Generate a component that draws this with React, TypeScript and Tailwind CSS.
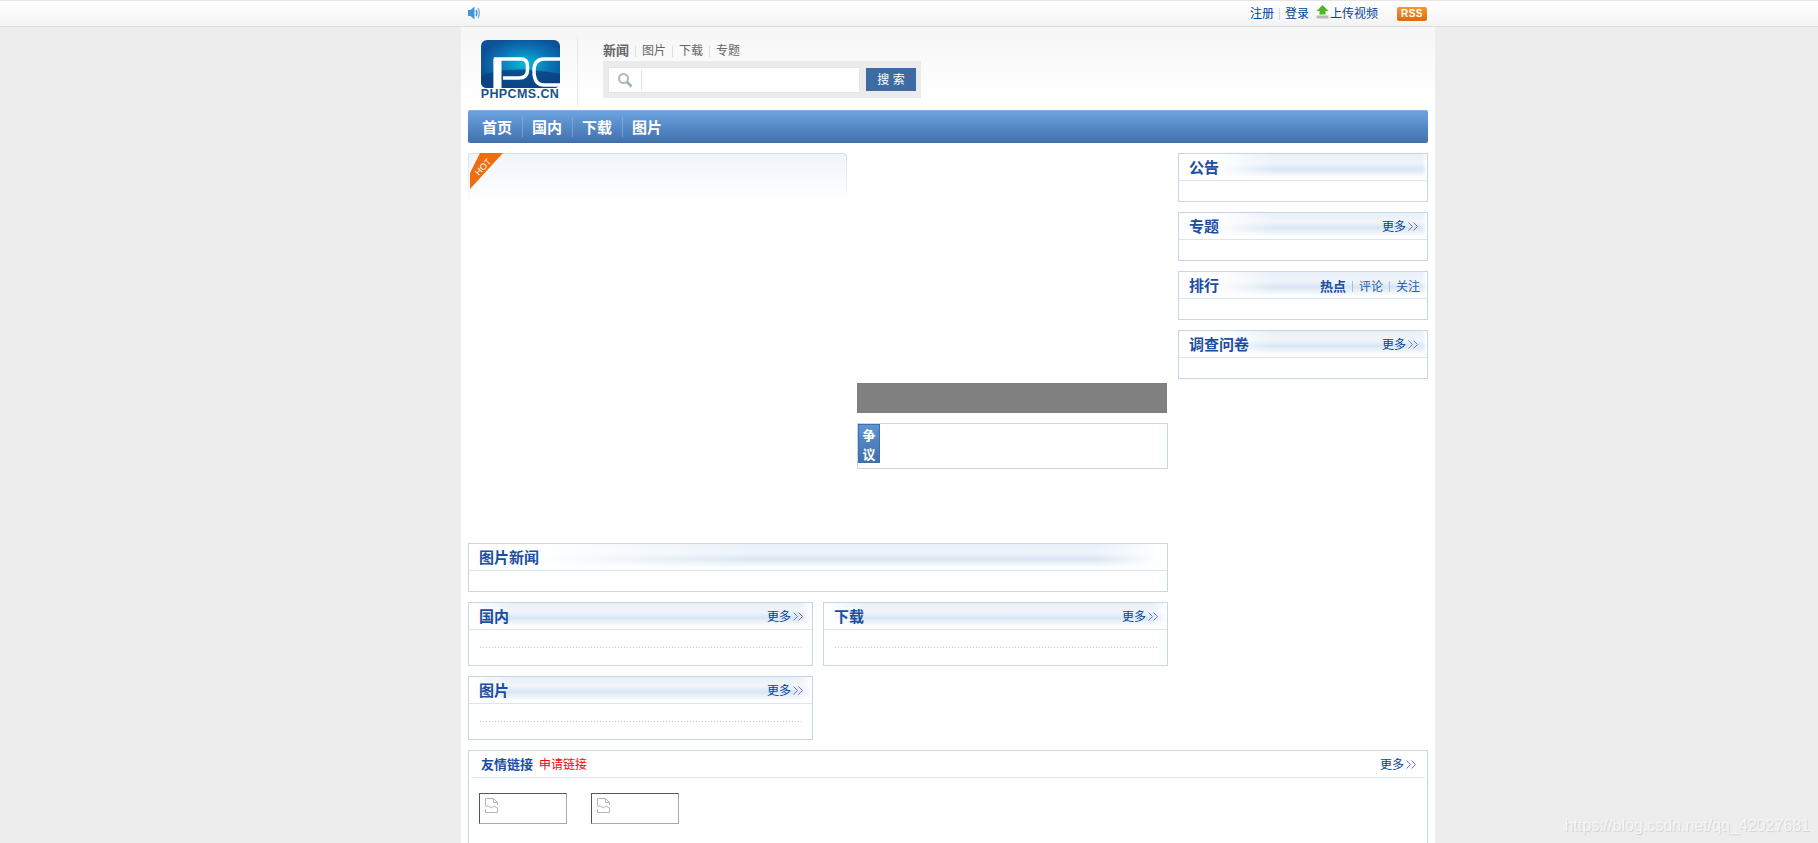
import React from "react";

const bands = {
  side: "bg-[linear-gradient(90deg,#fff_15%,rgba(255,255,255,0)_38%,rgba(255,255,255,0)_98%,#fff),linear-gradient(180deg,#e9f0f8,#f0f5fb_35%,#d9e6f3_58%,#f1f5fb_78%,#fff_92%)]",
  wide: "bg-[linear-gradient(90deg,#fff_9%,rgba(255,255,255,0)_40%,rgba(255,255,255,0)_90%,#fff_99%),linear-gradient(180deg,#e9f0f8,#f0f5fb_35%,#d9e6f3_58%,#f1f5fb_78%,#fff_92%)]",
  half: "bg-[linear-gradient(90deg,#fff_1%,rgba(255,255,255,0)_12%,rgba(255,255,255,0)_96%,#fff),linear-gradient(180deg,#e9f0f8,#f0f5fb_35%,#d9e6f3_58%,#f1f5fb_78%,#fff_92%)]",
};

function Chevrons() {
  return (
    <svg width="11" height="9" viewBox="0 0 11 9" className="ml-[2px]" fill="none" stroke="#6f79c4" strokeWidth="1">
      <path d="M0.5 0.5 L4.5 4.5 L0.5 8.5" />
      <path d="M5.5 0.5 L9.5 4.5 L5.5 8.5" />
    </svg>
  );
}

function More() {
  return (
    <a className="flex items-center text-[12px] leading-none text-[#004499]">
      更多
      <Chevrons />
    </a>
  );
}

function Box({
  title,
  right,
  children,
  bodyClass = "h-[20px]",
  band = "side",
  pad = "pr-[8px]",
}: {
  title: string;
  right?: React.ReactNode;
  children?: React.ReactNode;
  bodyClass?: string;
  band?: "side" | "wide" | "half";
  pad?: string;
}) {
  return (
    <div className="border border-[#c6d6e6] bg-white">
      <div className={`h-[26px] flex items-center justify-between pl-[10px] pt-[1px] ${pad} ${bands[band]}`}>
        <span className="text-[15px] leading-none font-bold text-[#1b4da0]">{title}</span>
        {right}
      </div>
      <div className="h-px bg-[#dbe5f0]" />
      <div className={bodyClass}>{children}</div>
    </div>
  );
}

function ListBox({ title }: { title: string }) {
  return (
    <Box title={title} right={<More />} band="half" bodyClass="h-[35px] pl-[11px] pr-[9px] pt-[17px]">
      <div className="h-px bg-[repeating-linear-gradient(90deg,#c9c9c9_0,#c9c9c9_1px,transparent_1px,transparent_3px)]" />
    </Box>
  );
}

function BrokenImg() {
  return (
    <div className="w-[88px] h-[31px] border border-t-[#555] border-l-[#555] border-r-[#aaa] border-b-[#aaa] pl-[5px] pt-[4px]">
      <svg width="13" height="15" viewBox="0 0 13 15" fill="none" stroke="#b5b5b5" strokeWidth="1">
        <path d="M0.5 8 V0.5 H8.5 L12.5 4.5 V7" />
        <path d="M8.5 0.5 V4.5 H12.5" />
        <path d="M0.5 11 V14.5 H12.5 V10" />
        <path d="M0.5 9 L3 7.5 L6 10 L9 8 L12.5 10" />
      </svg>
    </div>
  );
}

function Logo() {
  return (
    <div className="w-[80px] flex flex-col items-center">
      <svg width="79" height="48" viewBox="0 0 79 48" className="block">
        <defs>
          <radialGradient id="lg" cx="55%" cy="50%" r="55%">
            <stop offset="0%" stopColor="#06bcd9" />
            <stop offset="55%" stopColor="#0a7ab9" />
            <stop offset="100%" stopColor="#0d5299" />
          </radialGradient>
        </defs>
        <rect x="0" y="0" width="79" height="48" rx="6" fill="url(#lg)" />
        <path d="M0 36 Q30 24 79 34 V42 Q79 48 73 48 H6 Q0 48 0 42 Z" fill="#0a3f80" opacity="0.8" />
        <path d="M14.5 48 V19 H40 Q46.5 19 46.5 26 V30 Q46.5 38 38 38 H22" fill="none" stroke="#fff" strokeWidth="3.5" />
        <rect x="12.5" y="19" width="8" height="29" fill="#fff" />
        <path d="M79 19 H63 Q53 19 53 31 Q53 45 63 45 H79" fill="none" stroke="#fff" strokeWidth="3.5" />
      </svg>
      <span className="text-[12.5px] leading-[11px] mt-[1px] font-bold text-[#1a5286] tracking-[0.4px] whitespace-nowrap">
        PHPCMS.CN
      </span>
    </div>
  );
}

function TopBar() {
  return (
    <div className="h-[27px] border-t border-t-[#e6e6e6] border-b border-b-[#dddddd] bg-[linear-gradient(180deg,#ffffff,#f3f3f3)]">
      <div className="ml-[468px] w-[960px] h-[25px] flex items-center justify-between">
        <svg width="12" height="14" viewBox="0 0 12 14" fill="none" className="mt-[-1px]">
          <path d="M0 4 H2.5 L6.5 0.5 V13.5 L2.5 10 H0 Z" fill="#3f97d8" />
          <path d="M8 4 Q9.8 7 8 10" stroke="#3f97d8" strokeWidth="1.5" />
          <path d="M10 2 Q12.8 7 10 12" stroke="#7fbbe6" strokeWidth="1.5" />
        </svg>
        <div className="flex items-center text-[12px] leading-none text-[#004499] mr-[1px]">
          <a>注册</a>
          <span className="mx-[5px] w-px h-[12px] bg-[#d3dfec]" />
          <a>登录</a>
          <svg width="13" height="14" viewBox="0 0 13 14" className="ml-[7px] mr-[1px] mt-[-3px]">
            <path d="M6.5 0 L12.5 6 H9.5 V9.5 H3.5 V6 H0.5 Z" fill="#4fb81c" />
            <rect x="0.5" y="10.5" width="12" height="3" fill="#b9b9b9" />
          </svg>
          <a>上传视频</a>
          <span className="ml-[19px] w-[30px] h-[14px] rounded-[2px] bg-[linear-gradient(180deg,#f59a2c,#dd6a0c)] text-white text-[10px] font-bold flex items-center justify-center tracking-[0.4px]">
            RSS
          </span>
        </div>
      </div>
    </div>
  );
}

function Header() {
  return (
    <div className="h-[83px] flex bg-[linear-gradient(180deg,#f6f6f6,#ffffff_85%)] pl-[19px]">
      <div className="pt-[13px] w-[97px] h-[80px]">
        <Logo />
      </div>
      <div className="w-px h-[70px] mt-[10px] bg-[#e9e9e9]" />
      <div className="ml-[25px] pt-[15px]">
        <div className="flex items-center text-[12px] leading-[16px] text-[#666] h-[18px]">
          <span className="font-bold text-[13px]">新闻</span>
          <span className="mx-[6px] w-px h-[11px] bg-[#dddddd]" />
          <span>图片</span>
          <span className="mx-[6px] w-px h-[11px] bg-[#dddddd]" />
          <span>下载</span>
          <span className="mx-[6px] w-px h-[11px] bg-[#dddddd]" />
          <span>专题</span>
        </div>
        <div className="mt-[1px] w-[318px] h-[37px] bg-[#ebebeb] flex items-center pl-[5px]">
          <div className="w-[252px] h-[26px] bg-white border border-[#e6e6e6] flex items-center">
            <svg width="16" height="16" viewBox="0 0 16 16" fill="none" className="ml-[8px]">
              <circle cx="6.5" cy="6.5" r="4.5" stroke="#aab8c2" strokeWidth="2" />
              <path d="M10 10 L14.5 14.5" stroke="#9fb0ba" strokeWidth="2.6" />
            </svg>
            <span className="ml-[8px] w-px h-[20px] bg-[#dde3e6]" />
          </div>
          <button className="ml-[6px] w-[50px] h-[23px] bg-[#3d6ca5] text-white text-[12px] leading-none">搜 索</button>
        </div>
      </div>
    </div>
  );
}

function Nav() {
  const items = ["首页", "国内", "下载", "图片"];
  return (
    <div className="mx-[7px] h-[33px] rounded-[2px] border-t border-t-[#7fb0e6] bg-[linear-gradient(180deg,#6ba3e1,#3f70ab)] flex items-center pl-[14px]">
      {items.map((t, i) => (
        <React.Fragment key={t}>
          {i > 0 && <span className="w-px h-[20px] ml-[10px] mr-[9px] bg-[#8fb4dd] opacity-60" />}
          <span className="w-[30px] text-[15px] leading-none font-bold text-white">{t}</span>
        </React.Fragment>
      ))}
    </div>
  );
}

function Hot() {
  return (
    <div className="relative w-[379px] h-[52px] p-px pb-0 rounded-t-[4px] bg-[linear-gradient(180deg,#d4deef,#ffffff)]">
      <div className="h-full rounded-t-[3px] bg-[linear-gradient(180deg,#f0f5fb,#ffffff)]" />
      <svg width="36" height="38" viewBox="0 0 36 38" className="absolute left-0 top-0">
        <polygon points="12,0 35,0 2,36 2,20" fill="#ee6d0c" />
        <text x="15" y="17" fontSize="9" fill="#fff" textAnchor="middle" transform="rotate(-47 15 14)">
          HOT
        </text>
      </svg>
    </div>
  );
}

function Controversy() {
  return (
    <div className="w-[311px] h-[46px] border border-[#c6d6e6] bg-white">
      <div className="w-[22px] h-[39px] border border-[#3f6fab] bg-[linear-gradient(180deg,#5f95d2,#3f70ab)] text-white text-[13px] leading-[19px] font-bold flex flex-col items-center pt-[1px] overflow-hidden">
        <span>争</span>
        <span>议</span>
      </div>
    </div>
  );
}

function RankTabs() {
  return (
    <div className="flex items-center text-[12px] leading-none text-[#2a5ea8] mt-[2px]">
      <span className="font-bold text-[13px] text-[#1b4da0]">热点</span>
      <span className="mx-[6px] w-px h-[11px] bg-[#a9c0da]" />
      <span>评论</span>
      <span className="mx-[6px] w-px h-[11px] bg-[#a9c0da]" />
      <span>关注</span>
    </div>
  );
}

function Links() {
  return (
    <div className="mx-[7px] mt-[10px] border border-[#c6d6e6] border-b-0 bg-white px-[2px] h-[120px]">
      <div className="h-[26px] flex items-center justify-between pl-[10px] pr-[8px] pt-[1px]">
        <div className="flex items-center leading-none">
          <span className="text-[13px] font-bold text-[#1b4da0]">友情链接</span>
          <span className="ml-[6px] text-[12px] text-[#ff0000]">申请链接</span>
        </div>
        <More />
      </div>
      <div className="h-px bg-[#dbe5f0]" />
      <div className="flex gap-[24px] pl-[8px] pt-[15px]">
        <BrokenImg />
        <BrokenImg />
      </div>
    </div>
  );
}

export default function App() {
  return (
    <div className="relative h-[843px] overflow-hidden bg-[#ededed] [font-family:'Liberation_Sans','Noto_Sans_CJK_SC',sans-serif]">
      <TopBar />
      <div className="ml-[461px] w-[974px] h-[816px] bg-white">
        <Header />
        <Nav />
        <div className="mx-[7px] mt-[10px] flex gap-[10px]">
          <div className="w-[700px]">
            <div className="flex gap-[10px] h-[380px]">
              <Hot />
              <div className="w-[311px] pt-[230px]">
                <div className="w-[310px] h-[30px] bg-[#808080]" />
                <div className="mt-[10px]">
                  <Controversy />
                </div>
              </div>
            </div>
            <div className="mt-[10px]">
              <Box title="图片新闻" band="wide" />
            </div>
            <div className="mt-[10px] grid grid-cols-2 gap-[10px]">
              <ListBox title="国内" />
              <ListBox title="下载" />
              <ListBox title="图片" />
            </div>
          </div>
          <div className="w-[250px] flex flex-col gap-[10px]">
            <Box title="公告" />
            <Box title="专题" right={<More />} />
            <Box title="排行" right={<RankTabs />} pad="pr-[7px]" />
            <Box title="调查问卷" right={<More />} />
          </div>
        </div>
        <Links />
      </div>
      <div className="absolute right-[8px] bottom-[9px] text-[16px] leading-none text-[#f6f6f6] [text-shadow:1px_1px_1px_#cfcfcf] whitespace-nowrap">
        https://blog.csdn.net/qq_42027681
      </div>
    </div>
  );
}
